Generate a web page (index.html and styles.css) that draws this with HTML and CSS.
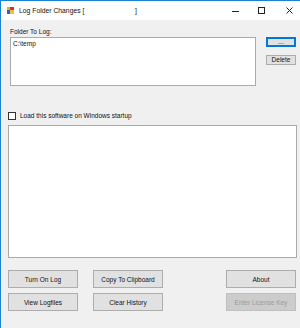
FILE: index.html
```html
<!DOCTYPE html>
<html lang="en">
<head>
    <meta charset="UTF-8">
    <meta name="viewport" content="width=device-width, initial-scale=1.0">
    <title>Log Folder Changes</title>
    <link rel="stylesheet" href="styles.css">
</head>
<body>
    <section class="window">
        <!-- title bar -->
        <header class="titlebar">
            <span class="appIcon">
                <svg width="7" height="7" viewBox="0 0 7 7">
                    <rect x="0" y="0" width="4" height="4" fill="#e8b020"/>
                    <rect x="3" y="0" width="4" height="3" fill="#d83030"/>
                    <rect x="0" y="3" width="3" height="4" fill="#3060c8"/>
                    <rect x="3" y="3" width="4" height="4" fill="#f0c040"/>
                </svg>
            </span>
            <span class="title">Log Folder Changes [</span>
            <span class="title title--end">]</span>
            <span class="ctl ctl--min">
                <svg width="7" height="7" viewBox="0 0 7 7"><path d="M0 4.5H7" stroke="#222" stroke-width="1"/></svg>
            </span>
            <span class="ctl ctl--max">
                <svg width="7" height="7" viewBox="0 0 7 7"><rect x="0.5" y="0.5" width="6" height="6" fill="none" stroke="#222" stroke-width="1"/></svg>
            </span>
            <span class="ctl ctl--close">
                <svg width="7" height="7" viewBox="0 0 7 7"><path d="M0.5 0.5L6.5 6.5M6.5 0.5L0.5 6.5" stroke="#222" stroke-width="1"/></svg>
            </span>
        </header>

        <!-- form body -->
        <main class="client">
            <label class="lbl">Folder To Log:</label>
            <div class="folderRow">
                <div class="listbox">
                    <div class="listItem">C:\temp</div>
                </div>
                <div class="sideBtns">
                    <button class="btn btn--small btn--default">...</button>
                    <button class="btn btn--small">Delete</button>
                </div>
            </div>

            <label class="check">
                <span class="checkBox"></span>
                <span>Load this software on Windows startup</span>
            </label>

            <div class="history"></div>

            <div class="actions">
                <button class="btn">Turn On Log</button>
                <button class="btn">Copy To Clipboard</button>
                <span></span>
                <button class="btn">About</button>
                <button class="btn">View Logfiles</button>
                <button class="btn">Clear History</button>
                <span></span>
                <button class="btn btn--disabled">Enter License Key</button>
            </div>
        </main>
    </section>
</body>
</html>
```

FILE: styles.css
```css
* {box-sizing: border-box;}
html, body {margin: 0; padding: 0; height: 100%;}
body {font-family: "Liberation Sans", Arial, sans-serif; font-size: 6.5px; color: #111; background: #f0f0f0;}

.window {
    width: 300px; height: 328px; display: flex; flex-direction: column;
    border-top: 1px solid #1883d7; border-left: 1px solid #1883d7; background: #f0f0f0;
}

/* title bar */
.titlebar {height: 19px; background: #fff; display: flex; align-items: center; position: relative;}
.appIcon {display: flex; margin-left: 6px;}
.title {font-size: 6.8px; margin-left: 5px; color: #111; white-space: pre;}
.title--end {position: absolute; left: 134px; margin: 0;}
.ctl {display: flex; position: absolute; top: 6px;}
.ctl--min {left: 231px;}
.ctl--max {left: 257px;}
.ctl--close {left: 285px;}

/* client area */
.client {flex: 1; display: flex; flex-direction: column; padding: 8px 3px 0 7px;}
.lbl {margin-left: 2px; line-height: 8px; height: 8px;}
.folderRow {display: flex; margin-top: 1px; margin-left: 2px; gap: 10px;}
.listbox {width: 246px; height: 49px; background: #fff; border: 1px solid #ababab; padding: 2px 2px;}
.listItem {line-height: 8px;}
.sideBtns {display: flex; flex-direction: column; gap: 8px;}

.btn {
    font-family: inherit; font-size: 6.5px; color: #111; background: #e1e1e1;
    border: 1px solid #adadad; padding: 0; margin: 0; height: 18px; white-space: nowrap;
}
.btn--small {width: 30px; height: 10px; line-height: 8px; overflow: hidden;}
.btn--default {border-color: #0078d7; box-shadow: inset 0 0 0 1px #0078d7;}
.btn--disabled {background: #cccccc; border-color: #bfbfbf; color: #9a9a9a;}

.check {display: flex; align-items: center; gap: 4px; margin-top: 26px; height: 8px; line-height: 8px;}
.checkBox {width: 8px; height: 8px; border: 1px solid #333; background: #fff; flex: none;}

.history {height: 133px; margin-top: 5px; background: #fff; border: 1px solid #ababab; width: 289px;}

.actions {
    display: grid; grid-template-columns: 70px 70px 1fr 70px; column-gap: 15px; row-gap: 5px;
    margin-top: 12px; width: 288px;
}
```
